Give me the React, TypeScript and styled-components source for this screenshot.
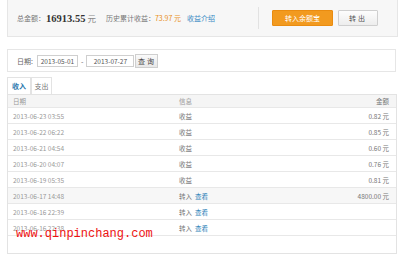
import styled, { createGlobalStyle } from "styled-components";

const GlobalStyle = createGlobalStyle`
    body {
        margin: 0;
        background: #fff;
        font-family: "Noto Sans CJK SC", "Liberation Sans", sans-serif;
        color: #666;
    }
`;

const Page = styled.div`
    position: relative;
    width: 400px;
    height: 254px;
    overflow: hidden;
    padding-left: 7px;
    box-sizing: border-box;
`;

const Summary = styled.div`
    display: flex;
    align-items: center;
    width: 391px;
    height: 38px;
    margin-top: -1px;
    box-sizing: border-box;
    background: #f7f7f7;
    border: 1px solid #e6e6e6;
    padding: 0 19px 0 9px;
`;
const Label = styled.span`
    font-size: 7px;
    color: #777;
`;
const Total = styled.span`
    font-family: "Liberation Serif", serif;
    font-weight: bold;
    font-size: 10.5px;
    color: #333;
    margin: 0 2px 0 1px;
`;
const Unit = styled.span<{ size?: number }>`
    font-size: ${p => p.size || 7}px;
    color: #888;
`;
const History = styled.div`
    margin-left: 10px;
    font-size: 7px;
    color: #777;
`;
const Orange = styled.span`
    color: #e8901e;
`;
const Link = styled.a`
    color: #3a8bc4;
    text-decoration: none;
    margin-left: 6px;
`;
const Divider = styled.div`
    width: 1px;
    height: 22px;
    background: #e2e2e2;
    margin-left: auto;
    margin-right: 13px;
`;
const Button = styled.div<{ primary?: boolean }>`
    display: flex;
    align-items: center;
    justify-content: center;
    height: 16px;
    box-sizing: border-box;
    font-size: 7px;
    width: ${p => (p.primary ? 61 : 40)}px;
    margin-left: ${p => (p.primary ? 0 : 5)}px;
    color: ${p => (p.primary ? "#fff" : "#555")};
    background: ${p => (p.primary ? "#f29a1f" : "linear-gradient(#fdfdfd, #ededed)")};
    border: 1px solid ${p => (p.primary ? "#ea8c10" : "#cfcfcf")};
    border-radius: 1px;
    letter-spacing: ${p => (p.primary ? 0 : 2)}px;
`;

const Filter = styled.div`
    display: flex;
    align-items: center;
    gap: 0;
    width: 389px;
    height: 23px;
    margin-top: 12px;
    box-sizing: border-box;
    border: 1px solid #e6e6e6;
    padding-left: 9px;
    font-size: 7px;
    color: #666;
`;
const FieldLabel = styled.span`
    margin-right: 4px;
`;
const DateInput = styled.div<{ w: number }>`
    width: ${p => p.w}px;
    height: 12px;
    box-sizing: border-box;
    border: 1px solid #cfcfcf;
    display: flex;
    align-items: center;
    justify-content: center;
    font-size: 6.5px;
    color: #555;
`;
const Dash = styled.span`
    margin: 0 3px;
`;
const Query = styled.div`
    height: 14px;
    width: 23px;
    margin-left: 1px;
    box-sizing: border-box;
    border: 1px solid #cfcfcf;
    background: linear-gradient(#fafafa, #e8e8e8);
    display: flex;
    align-items: center;
    justify-content: center;
    letter-spacing: 2px;
    color: #444;
`;

const Tabs = styled.div`
    display: flex;
    margin-top: 5px;
    height: 17px;
`;
const Tab = styled.div<{ active?: boolean }>`
    width: ${p => (p.active ? 24 : 21)}px;
    box-sizing: border-box;
    display: flex;
    align-items: center;
    justify-content: center;
    font-size: 7px;
    color: ${p => (p.active ? "#2a78ad" : "#777")};
    font-weight: ${p => (p.active ? "bold" : "normal")};
    background: #fff;
    border: 1px solid #e3e3e3;
    border-bottom: none;
`;

const Table = styled.div`
    width: 390px;
    height: 160px;
    box-sizing: border-box;
    border: 1px solid #e3e3e3;
    border-top: none;
`;
const Row = styled.div<{ head?: boolean; shade?: boolean }>`
    display: grid;
    grid-template-columns: 166px 1fr 80px;
    align-items: center;
    height: ${p => (p.head ? 14 : 16)}px;
    padding: 0 7px 0 5px;
    box-sizing: border-box;
    border-bottom: 1px solid #e8e8e8;
    background: ${p => (p.head ? "#f5f5f5" : p.shade ? "#f7f7f7" : "#fff")};
    border-top: ${p => (p.head ? "1px solid #e3e3e3" : "none")};
    font-size: 6.5px;
    color: #999;
`;
const Info = styled.span`
    color: #777;
`;
const View = styled.span`
    color: #2a7fb8;
    margin-left: 3px;
`;
const Amount = styled.span`
    text-align: right;
    color: #777;
`;

const Watermark = styled.div`
    position: absolute;
    left: 16px;
    top: 227px;
    font-family: "Liberation Mono", monospace;
    font-size: 12px;
    color: #ee1111;
`;

type Item = { date: string; info: string; amount?: string; link?: boolean };

const rows: Item[] = [
    { date: "2013-06-23 03:55", info: "收益", amount: "0.82" },
    { date: "2013-06-22 06:22", info: "收益", amount: "0.85" },
    { date: "2013-06-21 04:54", info: "收益", amount: "0.60" },
    { date: "2013-06-20 04:07", info: "收益", amount: "0.76" },
    { date: "2013-06-19 05:35", info: "收益", amount: "0.81" },
    { date: "2013-06-17 14:48", info: "转入", amount: "4800.00", link: true },
    { date: "2013-06-16 22:39", info: "转入", link: true },
    { date: "2013-06-16 22:38", info: "转入", link: true },
];

const App = () => {
    return (
        <Page>
            <GlobalStyle />
            <Summary>
                <Label>总金额：</Label>
                <Total>16913.55</Total>
                <Unit size={8.5}>元</Unit>
                <History>
                    历史累计收益：<Orange>73.97 元</Orange>
                    <Link>收益介绍</Link>
                </History>
                <Divider />
                <Button primary>转入余额宝</Button>
                <Button>转出</Button>
            </Summary>
            <Filter>
                <FieldLabel>日期:</FieldLabel>
                <DateInput w={41}>2013-05-01</DateInput>
                <Dash>-</Dash>
                <DateInput w={48}>2013-07-27</DateInput>
                <Query>查询</Query>
            </Filter>
            <Tabs>
                <Tab active>收入</Tab>
                <Tab>支出</Tab>
            </Tabs>
            <Table>
                <Row head>
                    <span>日期</span>
                    <span>信息</span>
                    <Amount>金额</Amount>
                </Row>
                {rows.map((r, i) => (
                    <Row key={i} shade={i === 5}>
                        <span>{r.date}</span>
                        <Info>
                            {r.info}
                            {r.link && <View>查看</View>}
                        </Info>
                        <Amount>{r.amount ? `${r.amount} 元` : ""}</Amount>
                    </Row>
                ))}
            </Table>
            <Watermark>www.qinpinchang.com</Watermark>
        </Page>
    );
};

export default App;
